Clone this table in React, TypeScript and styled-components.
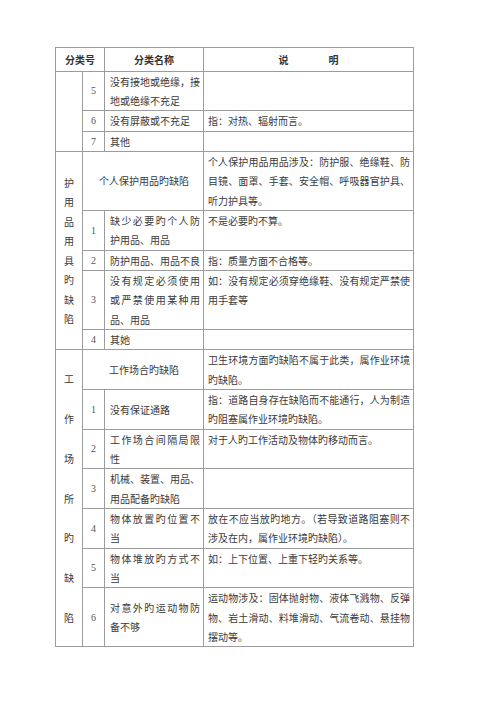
import styled, { createGlobalStyle } from 'styled-components';

type Row = { no?: string; name: string; note?: string; merged?: boolean };
type Group = { label: string; spread?: boolean; rows: Row[] };

const groups: Group[] = [
    {
        label: '',
        rows: [
            { no: '5', name: '没有接地或绝缘，接\n地或绝缘不充足' },
            { no: '6', name: '没有屏蔽或不充足', note: '指：对热、辐射而言。' },
            { no: '7', name: '其他' },
        ],
    },
    {
        label: '护用品用具旳缺陷',
        rows: [
            {
                merged: true,
                name: '个人保护用品旳缺陷',
                note: '个人保护用品用品涉及：防护服、绝缘鞋、防\n目镜、面罩、手套、安全帽、呼吸器官护具、\n听力护具等。',
            },
            { no: '1', name: '缺少必要旳个人防\n护用品、用品', note: '不是必要旳不算。' },
            { no: '2', name: '防护用品、用品不良', note: '指：质量方面不合格等。' },
            {
                no: '3',
                name: '没有规定必须使用\n或严禁使用某种用\n品、用品',
                note: '如：没有规定必须穿绝缘鞋、没有规定严禁使\n用手套等',
            },
            { no: '4', name: '其她' },
        ],
    },
    {
        label: '工作场所旳缺陷',
        spread: true,
        rows: [
            {
                merged: true,
                name: '工作场合旳缺陷',
                note: '卫生环境方面旳缺陷不属于此类，属作业环境\n旳缺陷。',
            },
            { no: '1', name: '没有保证通路', note: '指：道路自身存在缺陷而不能通行，人为制造\n旳阻塞属作业环境旳缺陷。' },
            { no: '2', name: '工作场合间隔局限\n性', note: '对于人旳工作活动及物体旳移动而言。' },
            { no: '3', name: '机械、装置、用品、\n用品配备旳缺陷' },
            {
                no: '4',
                name: '物体放置旳位置不\n当',
                note: '放在不应当放旳地方。（若导致道路阻塞则不\n涉及在内，属作业环境旳缺陷）。',
            },
            { no: '5', name: '物体堆放旳方式不\n当', note: '如：上下位置、上重下轻旳关系等。' },
            {
                no: '6',
                name: '对意外旳运动物防\n备不够',
                note: '运动物涉及：固体抛射物、液体飞溅物、反弹\n物、岩土滑动、料堆滑动、气流卷动、悬挂物\n摆动等。',
            },
        ],
    },
];

// each cell keeps the line breaks of the printed sheet; wrapped lines are spread to full width
const Lines = ({ text = '' }: { text?: string }) => {
    const lines = text.split('\n');
    return (
        <>
            {lines.map((line, index) => (
                <Line key={index} $fill={index < lines.length - 1}>
                    {line}
                </Line>
            ))}
        </>
    );
};

export default function App() {
    return (
        <Page>
            <GlobalStyle />
            <Sheet>
                <colgroup>
                    <col style={{ width: 27 }} />
                    <col style={{ width: 22 }} />
                    <col style={{ width: 99 }} />
                    <col style={{ width: 210 }} />
                </colgroup>
                <thead>
                    <tr>
                        <HeadCell colSpan={2}>分类号</HeadCell>
                        <HeadCell>分类名称</HeadCell>
                        <HeadCell>说{'\u3000\u3000\u3000\u3000'}明</HeadCell>
                    </tr>
                </thead>
                <tbody>
                    {groups.map((group) =>
                        group.rows.map((row, i) => (
                            <tr key={group.label + i}>
                                {i === 0 && (
                                    <LabelCell rowSpan={group.rows.length}>
                                        {group.label.split('').map((ch, k) => (
                                            <LabelChar key={k} $step={group.spread ? 39.7 : 19.5}>
                                                {ch}
                                            </LabelChar>
                                        ))}
                                    </LabelCell>
                                )}
                                {row.merged ? (
                                    <NameCell colSpan={2} $center>
                                        {row.name}
                                    </NameCell>
                                ) : (
                                    <>
                                        <NoCell>{row.no}</NoCell>
                                        <NameCell>
                                            <Lines text={row.name} />
                                        </NameCell>
                                    </>
                                )}
                                <NoteCell>
                                    <Lines text={row.note} />
                                </NoteCell>
                            </tr>
                        ))
                    )}
                </tbody>
            </Sheet>
        </Page>
    );
}

const GlobalStyle = createGlobalStyle`
    body {
        margin: 0;
        background: #ffffff;
        font-family: "Liberation Serif", "Noto Sans CJK SC", serif;
        color: #3a3a3a;
    }
`;

const Page = styled.div`
    padding: 47px 0 60px 55px;
`;

const Sheet = styled.table`
    border-collapse: collapse;
    table-layout: fixed;
    width: 358px;
    font-size: 10px;
    line-height: 19.35px;

    td, th {
        border: 1px solid #9c9c9c;
        padding: 0;
    }
`;

const HeadCell = styled.th`
    height: 22.5px;
    text-align: center;
    vertical-align: middle;
    font-family: "Noto Sans CJK SC", sans-serif;
    font-weight: 700;
    color: #333;
`;

const LabelCell = styled.td`
    text-align: center;
    vertical-align: middle;
    font-family: "Noto Sans CJK SC", sans-serif;
`;

const LabelChar = styled.div<{ $step: number }>`
    line-height: ${({ $step }) => $step}px;
`;

const NoCell = styled.td`
    text-align: center;
    vertical-align: middle;
    font-family: "Liberation Serif", serif;
    color: #555;
`;

const NameCell = styled.td<{ $center?: boolean }>`
    padding: 0 3px 0 5px !important;
    vertical-align: middle;
    text-align: ${({ $center }) => ($center ? 'center' : 'left')};
    font-family: "Noto Sans CJK SC", sans-serif;
`;

const NoteCell = styled.td`
    padding: 0 3px 0 4px !important;
    vertical-align: top;
    font-family: "Noto Sans CJK SC", sans-serif;
`;

const Line = styled.div<{ $fill: boolean }>`
    min-height: 19.35px;
    white-space: nowrap;
    text-align: ${({ $fill }) => ($fill ? 'justify' : 'inherit')};
    text-align-last: ${({ $fill }) => ($fill ? 'justify' : 'auto')};
    text-justify: inter-character;
`;
